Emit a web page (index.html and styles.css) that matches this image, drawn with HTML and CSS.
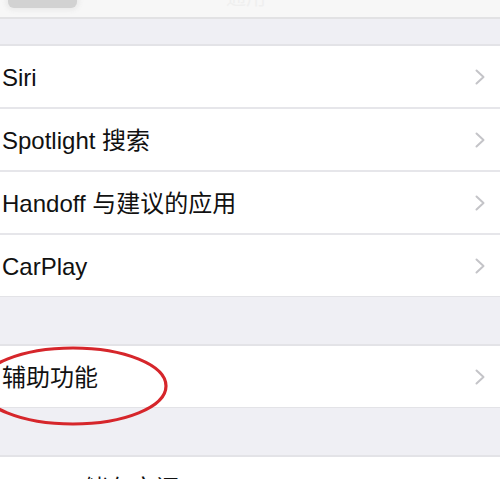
FILE: index.html
```html
<!DOCTYPE html>
<html lang="zh-CN">
<head>
<meta charset="utf-8">
<title>通用</title>
<link rel="stylesheet" href="styles.css">
</head>
<body>
<div class="screen">
  <header class="navbar">
    <div class="back-btn"></div>
    <div class="nav-title">通用</div>
  </header>
  <div class="spacer top"></div>
  <section class="group">
    <div class="row"><span class="label">Siri</span><span class="chev"><svg viewBox="0 0 10 16" width="10" height="16"><path d="M1.5 1.5 L8.5 8 L1.5 14.5" fill="none" stroke="#c4c4c8" stroke-width="2" stroke-linecap="round" stroke-linejoin="round"/></svg></span></div>
    <div class="row"><span class="label">Spotlight 搜索</span><span class="chev"><svg viewBox="0 0 10 16" width="10" height="16"><path d="M1.5 1.5 L8.5 8 L1.5 14.5" fill="none" stroke="#c4c4c8" stroke-width="2" stroke-linecap="round" stroke-linejoin="round"/></svg></span></div>
    <div class="row"><span class="label">Handoff 与建议的应用</span><span class="chev"><svg viewBox="0 0 10 16" width="10" height="16"><path d="M1.5 1.5 L8.5 8 L1.5 14.5" fill="none" stroke="#c4c4c8" stroke-width="2" stroke-linecap="round" stroke-linejoin="round"/></svg></span></div>
    <div class="row"><span class="label">CarPlay</span><span class="chev"><svg viewBox="0 0 10 16" width="10" height="16"><path d="M1.5 1.5 L8.5 8 L1.5 14.5" fill="none" stroke="#c4c4c8" stroke-width="2" stroke-linecap="round" stroke-linejoin="round"/></svg></span></div>
  </section>
  <div class="spacer mid"></div>
  <section class="group">
    <div class="row"><span class="label">辅助功能</span><span class="chev"><svg viewBox="0 0 10 16" width="10" height="16"><path d="M1.5 1.5 L8.5 8 L1.5 14.5" fill="none" stroke="#c4c4c8" stroke-width="2" stroke-linecap="round" stroke-linejoin="round"/></svg></span></div>
  </section>
  <div class="spacer low"></div>
  <section class="group">
    <div class="row"><span class="label">iPhone 储存空间</span><span class="chev"><svg viewBox="0 0 10 16" width="10" height="16"><path d="M1.5 1.5 L8.5 8 L1.5 14.5" fill="none" stroke="#c4c4c8" stroke-width="2" stroke-linecap="round" stroke-linejoin="round"/></svg></span></div>
  </section>
  <svg class="annotation" width="500" height="479" viewBox="0 0 500 479">
    <ellipse cx="73" cy="386" rx="93" ry="38" fill="none" stroke="#d6262b" stroke-width="3.2"/>
  </svg>
</div>
</body>
</html>
```
FILE: styles.css
```css
html, body {
  margin: 0;
  padding: 0;
  background: #efeff4;
}
.screen {
  position: relative;
  width: 500px;
  height: 479px;
  overflow: hidden;
  background: #efeff4;
  font-family: "Liberation Sans", "Noto Sans CJK SC", sans-serif;
  color: #111;
}
.navbar {
  height: 17px;
  background: #f7f7f7;
  border-bottom: 2px solid #e2e2e4;
  position: relative;
}
.back-btn {
  position: absolute;
  left: 8px;
  top: -12px;
  width: 69px;
  height: 20px;
  border-radius: 6px;
  background: #d2d2d2;
  box-shadow: 0 0 4px 3px #ececec;
}
.nav-title {
  position: absolute;
  left: 226px;
  top: -18px;
  font-size: 20px;
  color: #efefef;
}
.spacer.top { height: 25px; }
.spacer.mid { height: 47px; }
.spacer.low { height: 47px; }
.group {
  background: #fff;
  border-top: 2px solid #e3e3e7;
  border-bottom: 1px solid #e3e3e7;
}
.row {
  height: 61px;
  display: flex;
  align-items: center;
  justify-content: space-between;
  padding: 0 15px 0 2px;
  border-bottom: 2px solid #e6e6ea;
}
.row:last-child { border-bottom: none; }
.label {
  font-size: 24px;
  line-height: 1;
  padding-top: 3px;
}
.chev {
  display: flex;
  width: 10px;
  height: 16px;
}
.annotation {
  position: absolute;
  left: 0;
  top: 0;
  pointer-events: none;
}
```
